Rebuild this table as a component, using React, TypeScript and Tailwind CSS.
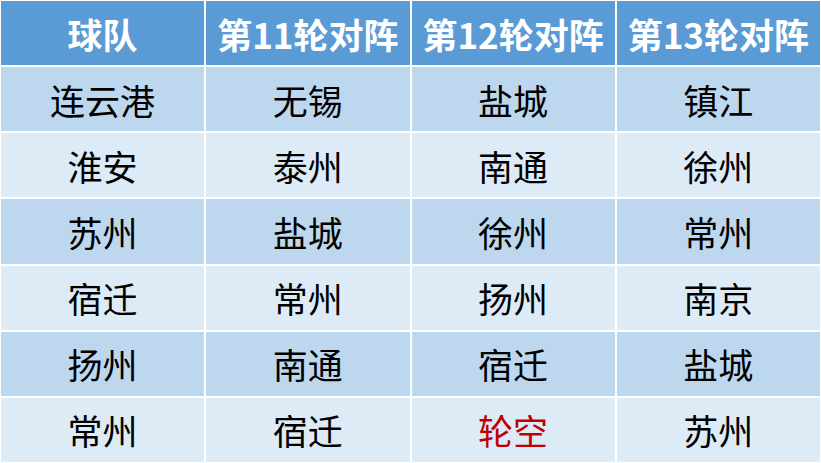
import React from "react";

const header = ["球队", "第11轮对阵", "第12轮对阵", "第13轮对阵"];
const rows = [
  ["连云港", "无锡", "盐城", "镇江"],
  ["淮安", "泰州", "南通", "徐州"],
  ["苏州", "盐城", "徐州", "常州"],
  ["宿迁", "常州", "扬州", "南京"],
  ["扬州", "南通", "宿迁", "盐城"],
  ["常州", "宿迁", "轮空", "苏州"],
];

export default function App() {
  return (
    <div
      className="w-[821px] h-[463px] bg-white p-[1px] grid grid-cols-4 grid-rows-7 gap-[2px]"
      style={{ fontFamily: '"Noto Sans CJK SC", "Noto Sans", sans-serif' }}
    >
      {header.map((h) => (
        <div
          key={h}
          className="bg-[#5b9bd5] text-white font-bold text-[35px] flex items-center justify-center leading-none"
        >
          {h}
        </div>
      ))}
      {rows.map((r, i) =>
        r.map((c, j) => (
          <div
            key={`${i}-${j}`}
            className={`${i % 2 === 0 ? "bg-[#bdd7ee]" : "bg-[#ddebf7]"} ${
              c === "轮空" ? "text-[#c00000]" : "text-black"
            } text-[35px] flex items-center justify-center leading-none`}
          >
            {c}
          </div>
        ))
      )}
    </div>
  );
}
